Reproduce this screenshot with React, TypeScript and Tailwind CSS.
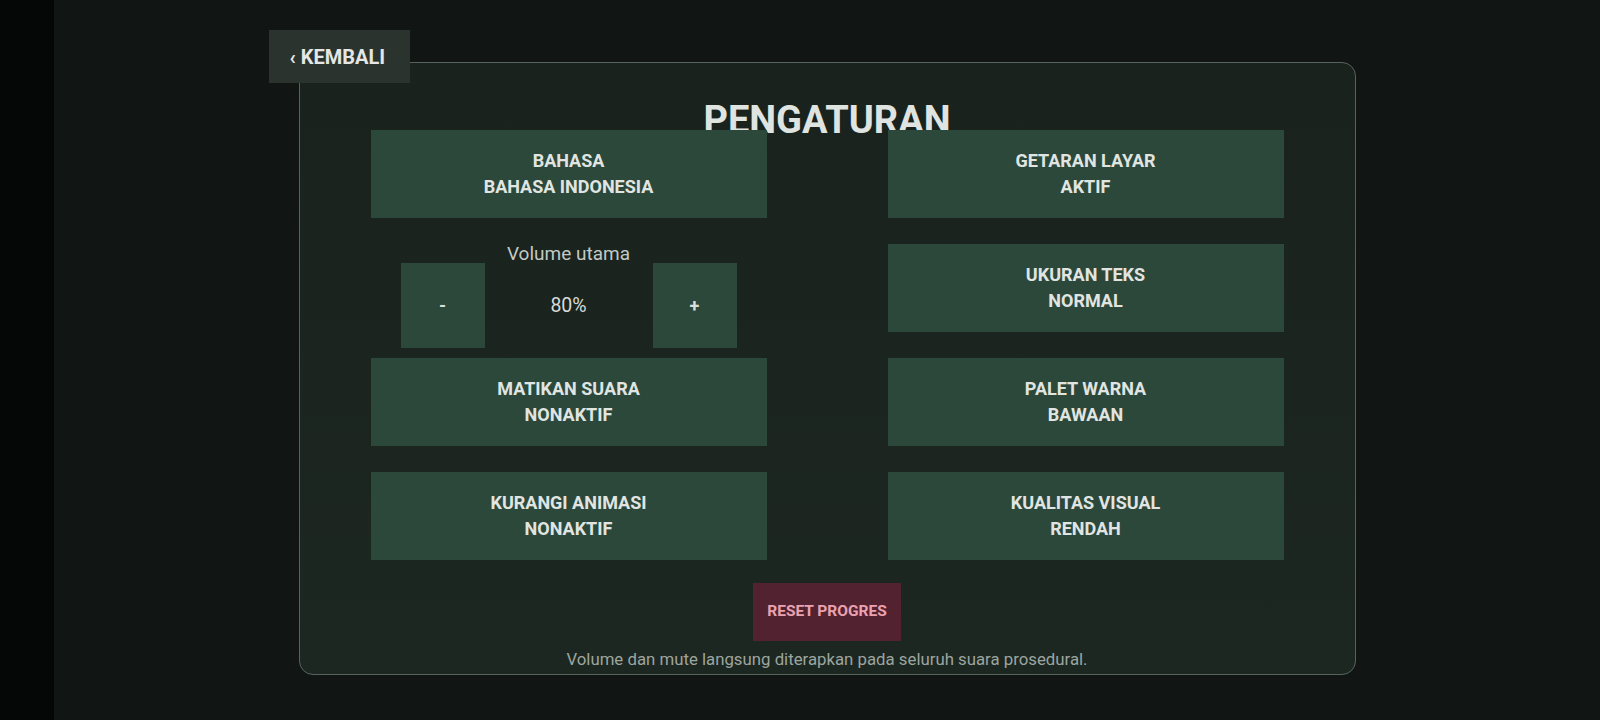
import { useState } from "react";

type Setting = { label: string; value: string };

const left: (Setting | "volume")[] = [
  { label: "BAHASA", value: "BAHASA INDONESIA" },
  "volume",
  { label: "MATIKAN SUARA", value: "NONAKTIF" },
  { label: "KURANGI ANIMASI", value: "NONAKTIF" },
];

const right: Setting[] = [
  { label: "GETARAN LAYAR", value: "AKTIF" },
  { label: "UKURAN TEKS", value: "NORMAL" },
  { label: "PALET WARNA", value: "BAWAAN" },
  { label: "KUALITAS VISUAL", value: "RENDAH" },
];

function SettingCard({ s }: { s: Setting }) {
  return (
    <button className="relative flex h-[88px] flex-col items-center justify-center bg-[#2b483a] text-[18px] font-bold leading-[26px] text-[#e1e5e2]">
      <span>{s.label}</span>
      <span>{s.value}</span>
    </button>
  );
}

function VolumeControl() {
  const [vol, setVol] = useState(80);
  return (
    <div className="relative flex h-[88px] flex-col items-center">
      <div className="mt-[1px] text-[19px] leading-[18px] text-[#c3c9c5]">Volume utama</div>
      <div className="flex items-center">
        <button
          onClick={() => setVol((v) => Math.max(0, v - 10))}
          className="h-[85px] w-[84px] bg-[#2b483a] text-[18px] font-bold text-[#d9dedb]"
        >
          -
        </button>
        <div className="w-[168px] text-center text-[19.5px] text-[#d6dbd8]">{vol}%</div>
        <button
          onClick={() => setVol((v) => Math.min(100, v + 10))}
          className="h-[85px] w-[84px] bg-[#2b483a] text-[18px] font-bold text-[#d9dedb]"
        >
          +
        </button>
      </div>
    </div>
  );
}

export default function App() {
  const rows = left.map((l, i) => [l, right[i]] as const);
  return (
    <div className="flex min-h-[720px] w-full bg-[#111514] font-['Roboto',sans-serif]">
      <div className="w-[54px] shrink-0 bg-[#050606]" />
      <main className="flex flex-1 justify-center pt-[62px]">
        <section className="relative flex h-[613px] w-[1057px] flex-col items-center rounded-[14px] border border-[#56645d] bg-gradient-to-b from-[#19221d] to-[#1d2721] pt-[38px]">
          <button className="absolute left-[-31px] top-[-33px] flex h-[53px] w-[141px] items-center bg-[#2b332e] pl-[21px] text-[20px] font-bold text-[#e4e7e5]">
            ‹ KEMBALI
          </button>

          <h1 className="h-[38px] text-[38px] font-bold leading-[38px] text-[#dfe4e1]">PENGATURAN</h1>

          <div className="-mt-[9px] grid w-[913px] grid-cols-[396px_396px] justify-between gap-y-[26px]">
            {rows.map(([l, r], i) => (
              <div key={i} className="contents">
                {l === "volume" ? <VolumeControl /> : <SettingCard s={l} />}
                <SettingCard s={r} />
              </div>
            ))}
          </div>

          <button className="mt-[23px] h-[58px] w-[148px] bg-[#532230] text-[15.5px] font-bold text-[#eba2b0]">
            RESET PROGRES
          </button>

          <p className="mt-[6px] text-[16.8px] leading-[24px] text-[#9ca59f]">
            Volume dan mute langsung diterapkan pada seluruh suara prosedural.
          </p>
        </section>
      </main>
    </div>
  );
}
